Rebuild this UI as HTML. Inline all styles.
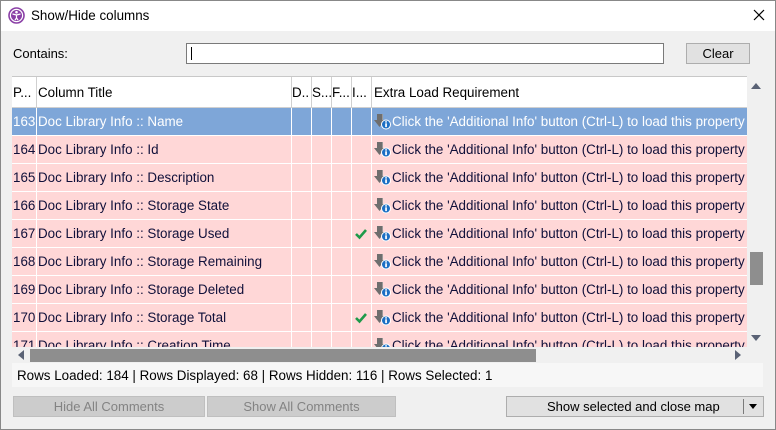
<!DOCTYPE html>
<html><head><meta charset="utf-8"><style>
*{margin:0;padding:0;box-sizing:border-box}
body{width:776px;height:430px;overflow:hidden;background:#f0f0f0;font-family:"Liberation Sans",sans-serif;font-size:13px;color:#000;position:relative}
.frame{position:absolute;left:0;top:0;width:776px;height:430px;border:1px solid #888;pointer-events:none}
.abs{position:absolute}
.title{left:0;top:0;width:776px;height:31px;background:#fff}
.grid{left:12px;top:76px;width:735px;height:271px;background:#fff;overflow:hidden;border-top:1px solid #c8c8c8}
.row{position:absolute;left:0;width:735px;height:28px;background:#ffd7d7;border-bottom:1px solid #fff;color:#10103a;font-size:13.4px}
.row.sel{background:#7ea6d8;color:#fff}
.cell{position:absolute;top:0;height:28px;line-height:28px;white-space:nowrap;overflow:hidden;padding-left:1px}
.vl{position:absolute;top:0;width:1px;height:100%;background:#fff}
.hdr .vl{background:#d0d0d0}
.btn{position:absolute;height:21px;line-height:19px;text-align:center;border:1px solid #adadad;background:#e1e1e1}
</style></head><body>
<div class="abs title">
<svg class="abs" style="left:8px;top:7px" width="17" height="17" viewBox="0 0 17 17"><circle cx="8.5" cy="8.5" r="7.5" fill="none" stroke="#8a3fa6" stroke-width="1.6"/><circle cx="8.5" cy="8.5" r="5.5" fill="#8a3fa6"/><circle cx="8.5" cy="5.2" r="1.3" fill="#fff"/><path d="M4.5 7l4 1 4-1M8.5 8v3M7 13l1.5-2 1.5 2" stroke="#fff" stroke-width="1.2" fill="none"/></svg>
<div class="abs" style="left:31px;top:8px;font-size:13.4px">Show/Hide columns</div>
<svg class="abs" style="left:753px;top:9px" width="12" height="12"><path d="M1 1L11 11M11 1L1 11" stroke="#000" stroke-width="1.2"/></svg>
</div>
<div class="abs" style="left:13px;top:46px">Contains:</div>
<div class="abs" style="left:186px;top:43px;width:478px;height:21px;background:#fff;border:1px solid #7a7a7a"><div class="abs" style="left:4px;top:3px;width:1px;height:13px;background:#000"></div></div>
<div class="btn" style="left:686px;top:43px;width:64px">Clear</div>

<div class="abs grid">
<div class="row hdr" style="top:0;height:31px;background:#fff;color:#000;border-bottom:1px solid #d0d0d0">
<div class="cell" style="left:0;height:31px;line-height:31px">P...</div>
<div class="cell" style="left:25px;height:31px;line-height:31px">Column Title</div>
<div class="cell" style="left:279px;height:31px;line-height:31px">D..</div>
<div class="cell" style="left:299px;height:31px;line-height:31px">S...</div>
<div class="cell" style="left:319px;height:31px;line-height:31px">F...</div>
<div class="cell" style="left:339px;height:31px;line-height:31px">I...</div>
<div class="cell" style="left:361px;height:31px;line-height:31px">Extra Load Requirement</div>
<div class="vl" style="left:24px"></div><div class="vl" style="left:279px"></div><div class="vl" style="left:299px"></div><div class="vl" style="left:319px"></div><div class="vl" style="left:339px"></div><div class="vl" style="left:359px"></div>
</div>
</div>

<div id="rows"></div>
<script>
var names=["Name","Id","Description","Storage State","Storage Used","Storage Remaining","Storage Deleted","Storage Total","Creation Time"];
var g=document.querySelector('.grid'),h='';
var ic='<svg style="position:absolute;left:362px;top:5px" width="17" height="17" viewBox="0 0 17 17"><path d="M3 1h5v6h3l-5.5 7L0 7h3z" fill="#6e6e6e"/><path d="M8 1h1v6h-1z" fill="#9a9a9a"/><circle cx="12" cy="11.5" r="4.5" fill="#1c6fc4" stroke="#fff" stroke-width="1"/><rect x="11.2" y="10.3" width="1.7" height="3.8" fill="#fff"/><rect x="11.2" y="8.2" width="1.7" height="1.4" fill="#fff"/></svg>';
var ck='<svg style="position:absolute;left:343px;top:8px" width="13" height="12"><path d="M1 6l3.5 3.5L11 2" stroke="#1e9a4a" stroke-width="2.6" fill="none"/></svg>';
for(var i=0;i<9;i++){
 var t=31+i*28;
 h+='<div class="row'+(i==0?' sel':'')+'" style="top:'+t+'px">'+
 '<div class="cell" style="left:0">'+(163+i)+'</div>'+
 '<div class="cell" style="left:25px">Doc Library Info :: '+names[i]+'</div>'+
 ((i==4||i==7)?ck:'')+ic+
 '<div class="cell" style="left:379px">Click the \'Additional Info\' button (Ctrl-L) to load this property</div>'+
 '<div class="vl" style="left:24px"></div><div class="vl" style="left:279px"></div><div class="vl" style="left:299px"></div><div class="vl" style="left:319px"></div><div class="vl" style="left:339px"></div><div class="vl" style="left:359px"></div></div>';
}
g.innerHTML+=h;
</script>

<div class="abs" style="left:747px;top:76px;width:18px;height:271px;background:#f0f0f0"></div>
<svg class="abs" style="left:751px;top:83px" width="10" height="6"><path d="M0 6L5 0 10 6z" fill="#5a6275"/></svg>
<div class="abs" style="left:750px;top:252px;width:13px;height:33px;background:#8e8e8e"></div>
<svg class="abs" style="left:751px;top:335px" width="10" height="6"><path d="M0 0L5 6 10 0z" fill="#5a6275"/></svg>

<div class="abs" style="left:12px;top:347px;width:735px;height:16px;background:#f0f0f0"></div>
<svg class="abs" style="left:18px;top:350px" width="6" height="10"><path d="M6 0L0 5 6 10z" fill="#5a6275"/></svg>
<div class="abs" style="left:30px;top:349px;width:506px;height:13px;background:#8e8e8e"></div>
<svg class="abs" style="left:735px;top:350px" width="6" height="10"><path d="M0 0L6 5 0 10z" fill="#5a6275"/></svg>

<div class="abs" style="left:12px;top:363px;width:751px;height:24px;background:#f7f7f7"></div>
<div class="abs" style="left:17px;top:368px;font-size:13.4px">Rows Loaded: 184 | Rows Displayed: 68 | Rows Hidden: 116 | Rows Selected: 1</div>

<div class="btn" style="left:13px;top:396px;width:192px;color:#838383;background:#cccccc;border-color:#bfbfbf">Hide All Comments</div>
<div class="btn" style="left:207px;top:396px;width:189px;color:#838383;background:#cccccc;border-color:#bfbfbf">Show All Comments</div>
<div class="btn" style="left:506px;top:396px;width:258px;text-align:left;padding-left:40px">Show selected and close map
<div class="abs" style="left:236px;top:2px;width:1px;height:15px;background:#7a7a7a"></div>
<svg class="abs" style="left:242px;top:7px" width="8" height="5"><path d="M0 0h8L4 5z" fill="#000"/></svg></div>
<div class="frame"></div>
</body></html>
